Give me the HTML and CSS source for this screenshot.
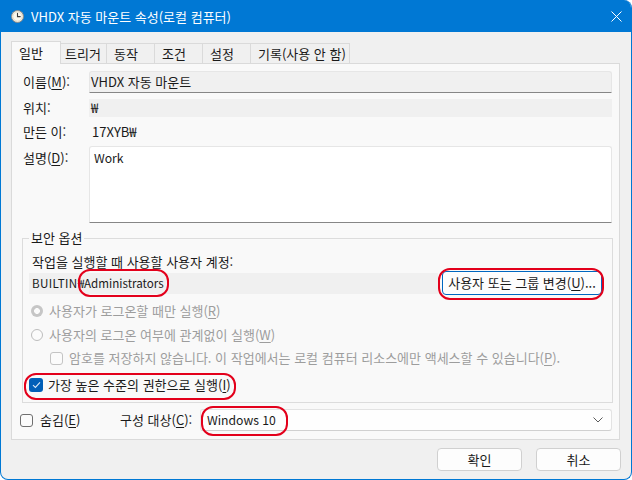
FILE: index.html
```html
<!DOCTYPE html>
<html lang="ko">
<head>
  <meta charset="UTF-8">
  <title>VHDX 자동 마운트 속성(로컬 컴퓨터)</title>
  <link rel="stylesheet" href="styles.css">
</head>
<body>
  <div class="window">
    <div class="titlebar">
      <svg class="app-icon" width="13" height="13" viewBox="0 0 13 13">
        <circle cx="6.5" cy="6.5" r="6" fill="#f3efe2" stroke="#8a8a8a"/>
        <circle cx="6.5" cy="6.5" r="4.6" fill="#fbf8ee" stroke="#d6cfb8" stroke-width="0.6"/>
        <path d="M6.5 3.2V6.6H9.2" fill="none" stroke="#3b3b3b" stroke-width="1.1" stroke-linecap="round"/>
      </svg>
      <span class="title">VHDX 자동 마운트 속성(로컬 컴퓨터)</span>
      <svg class="close" width="11" height="11" viewBox="0 0 11 11">
        <path d="M0.5 0.5L10.5 10.5M10.5 0.5L0.5 10.5" stroke="#fff" stroke-width="1"/>
      </svg>
    </div>

    <div class="tabs">
      <div class="tab active">일반</div>
      <div class="tab tab-trigger">트리거</div>
      <div class="tab">동작</div>
      <div class="tab">조건</div>
      <div class="tab">설정</div>
      <div class="tab tab-history">기록(사용 안 함)</div>
    </div>

    <div class="panel">
      <div class="row">
        <label class="lbl">이름(<u>M</u>):</label>
        <div class="field field-name">VHDX 자동 마운트</div>
      </div>
      <div class="row row-loc">
        <label class="lbl">위치:</label>
        <div class="field field-loc">₩</div>
      </div>
      <div class="row row-author">
        <label class="lbl">만든 이:</label>
        <div class="plain">17XYB₩</div>
      </div>
      <div class="row row-desc">
        <label class="lbl">설명(<u>D</u>):</label>
        <div class="textarea"><span class="latin">Work</span></div>
      </div>

      <fieldset class="group">
        <legend>보안 옵션</legend>
        <div class="line">작업을 실행할 때 사용할 사용자 계정:</div>
        <div class="user-row">
          <div class="user-field latin-sm"><span class="caps">BUILTIN</span><span class="mark mark-admin">₩Administrators</span></div>
          <div class="mark mark-btn"><div class="btn btn-focus">사용자 또는 그룹 변경(<u>U</u>)...</div></div>
        </div>
        <div class="opt opt-r1 disabled">
          <span class="radio checked"></span>사용자가 로그온할 때만 실행(<u>R</u>)
        </div>
        <div class="opt opt-r2 disabled">
          <span class="radio"></span>사용자의 로그온 여부에 관계없이 실행(<u>W</u>)
        </div>
        <div class="opt opt-pw disabled">
          <span class="check"></span>암호를 저장하지 않습니다. 이 작업에서는 로컬 컴퓨터 리소스에만 액세스할 수 있습니다(<u>P</u>).
        </div>
        <div class="opt opt-high">
          <span class="mark mark-high">
            <span class="check checked">
              <svg width="9" height="8" viewBox="0 0 9 8"><path d="M1 4.2L3.4 6.4L8 1.4" fill="none" stroke="#dbe9f7" stroke-width="1.1"/></svg>
            </span>가장 높은 수준의 권한으로 실행(<u>I</u>)
          </span>
        </div>
      </fieldset>

      <div class="bottom-row">
        <span class="check hide-check"></span>
        <span class="hide-label">숨김(<u>E</u>)</span>
        <span class="config-label">구성 대상(<u>C</u>):</span>
        <div class="select">
          <span class="mark mark-win latin">Windows 10</span>
          <svg class="chevron" width="10" height="6" viewBox="0 0 10 6"><path d="M0.5 0.5L5 5L9.5 0.5" fill="none" stroke="#5c5c5c" stroke-width="1"/></svg>
        </div>
      </div>
    </div>

    <div class="buttons">
      <div class="btn btn-dlg">확인</div>
      <div class="btn btn-dlg">취소</div>
    </div>
  </div>
</body>
</html>
```

FILE: styles.css
```css
body {
  margin: 0;
  background: #fff;
  font-family: "Noto Sans CJK KR", "Noto Sans", sans-serif;
  font-size: 13px;
  line-height: 16px;
  color: #1a1a1a;
}
u {
  text-underline-offset: 2px;
}
.latin {
  font-size: 12.2px;
}
.latin-sm {
  font-size: 11.6px;
}
.caps {
  letter-spacing: 0.4px;
}
.window {
  width: 632px;
  height: 480px;
  box-sizing: border-box;
  border: 1px solid #0078d4;
  border-top: 0;
  border-radius: 0 8px 8px 8px;
  background: #f0f0f0;
  overflow: hidden;
}
.titlebar {
  height: 31px;
  background: #0078d4;
  color: #fff;
  display: flex;
  align-items: center;
  padding: 1px 9px 0 10px;
}
.title {
  margin-left: 7px;
}
.close {
  margin-left: auto;
}

/* tabs */
.tabs {
  display: flex;
  margin-top: 9px;
  padding-left: 10px;
  height: 22px;
  position: relative;
  z-index: 1;
}
.tab {
  box-sizing: border-box;
  width: 48px;
  height: 20px;
  margin-top: 2px;
  padding-left: 7px;
  border: 1px solid #dadada;
  border-left: 0;
  border-bottom: 0;
  display: flex;
  align-items: center;
}
.tab.active {
  width: 50px;
  height: 23px;
  margin-top: 0;
  border-left: 1px solid #dadada;
  background: #f9f9f9;
}
.tab-trigger {
  width: 46px;
  padding-left: 4px;
}
.tab-history {
  width: 99px;
}

/* main panel */
.panel {
  box-sizing: border-box;
  width: 609px;
  height: 377px;
  margin-left: 10px;
  border: 1px solid #dadada;
  background: #f9f9f9;
  padding: 7px 7px 0 11px;
}
.row {
  display: flex;
  align-items: center;
}
.lbl {
  width: 66px;
  flex: none;
}
.field {
  flex: 1;
  box-sizing: border-box;
  display: flex;
  align-items: center;
}
.field-name {
  height: 22px;
  background: #f0f0f0;
  border: 1px solid #e6e6e6;
  border-bottom: 1px solid #868686;
  border-radius: 3px 3px 0 0;
  padding-left: 1px;
}
.row-loc {
  margin-top: 6px;
}
.field-loc {
  height: 18px;
  background: #f0f0f0;
  padding-left: 2px;
}
.row-author {
  margin-top: 6px;
  height: 18px;
}
.plain {
  padding-left: 3px;
}
.row-desc {
  margin-top: 5px;
  align-items: flex-start;
}
.row-desc .lbl {
  padding-top: 4px;
}
.textarea {
  flex: 1;
  box-sizing: border-box;
  height: 77px;
  background: #fff;
  border: 1px solid #e6e6e6;
  border-bottom: 1px solid #868686;
  border-radius: 3px 3px 0 0;
  padding: 3px 4px;
}

/* security options */
.group {
  margin: 7px -1px 0 -1px;
  padding: 8px 10px 9px 9px;
  border: 1px solid #dcdcdc;
  border-radius: 0;
}
.group legend {
  margin-left: -3px;
  padding: 0 2px;
}
.user-row {
  display: flex;
  align-items: center;
  gap: 4px;
  margin: 1px 0 0 -3px;
}
.user-field {
  flex: 1;
  height: 21px;
  background: #f0f0f0;
  display: flex;
  align-items: center;
  padding-left: 3px;
}
.btn {
  box-sizing: border-box;
  display: flex;
  align-items: center;
  justify-content: center;
  background: #fdfdfd;
  border: 1px solid #d0d0d0;
  border-radius: 4px;
}
.btn-focus {
  width: 160px;
  height: 24px;
  border: 1px solid #0067c0;
  box-shadow: inset 0 0 0 1px #ffffff;
}
.opt {
  display: flex;
  align-items: center;
  height: 16px;
}
.disabled {
  color: #9d9d9d;
}
.opt-r1 {
  margin-top: 8px;
}
.opt-r2 {
  margin-top: 8px;
}
.opt-pw {
  margin-top: 7px;
  padding-left: 18px;
}
.opt-high {
  margin-top: 11px;
  margin-left: -3px;
}
.radio {
  width: 12px;
  height: 12px;
  box-sizing: border-box;
  border-radius: 50%;
  border: 1px solid #bdbdbd;
  background: #fbfbfb;
  margin: 0 6px 0 -1px;
}
.radio.checked {
  border: 0;
  background: radial-gradient(circle, #fbfbfb 0 2.6px, #c6c6c6 3.2px);
}
.check {
  width: 13px;
  height: 13px;
  box-sizing: border-box;
  border: 1px solid #c4c4c4;
  border-radius: 3px;
  background: #fbfbfb;
  margin-right: 6px;
  display: flex;
  align-items: center;
  justify-content: center;
}
.check.checked {
  width: 14px;
  height: 14px;
  border: 0;
  background: #005fb8;
  margin-right: 5px;
}
.mark-high {
  display: flex;
  align-items: center;
}

/* bottom row */
.bottom-row {
  display: flex;
  align-items: center;
  margin: 6px 0 0 -3px;
}
.hide-check {
  border-color: #6f6f6f;
  margin-right: 7px;
}
.hide-label {
  width: 80px;
}
.config-label {
  width: 80px;
}
.select {
  flex: 1;
  box-sizing: border-box;
  height: 22px;
  background: #fefefe;
  border: 1px solid #e3e3e3;
  border-bottom-color: #d0d0d0;
  border-radius: 3px;
  display: flex;
  align-items: center;
  padding: 0 8px 0 6px;
}
.chevron {
  margin-left: auto;
}

/* dialog buttons */
.buttons {
  display: flex;
  justify-content: flex-end;
  gap: 14px;
  margin-top: 8px;
  padding-right: 10px;
}
.btn-dlg {
  width: 85px;
  height: 23px;
}

/* red annotation outlines */
.mark {
  position: relative;
}
.mark::after {
  content: "";
  position: absolute;
  border: 2px solid #e3001b;
  border-radius: 12px;
  pointer-events: none;
}
.mark-admin::after {
  top: -6px;
  bottom: -6px;
  left: 0;
  right: -5px;
}
.mark-btn::after {
  top: -3px;
  bottom: -5px;
  left: -4px;
  right: -2px;
}
.mark-high::after {
  top: -4px;
  bottom: -7px;
  left: -5px;
  right: -5px;
}
.mark-win::after {
  top: -6px;
  bottom: -8px;
  left: -6px;
  right: -12px;
}
```
